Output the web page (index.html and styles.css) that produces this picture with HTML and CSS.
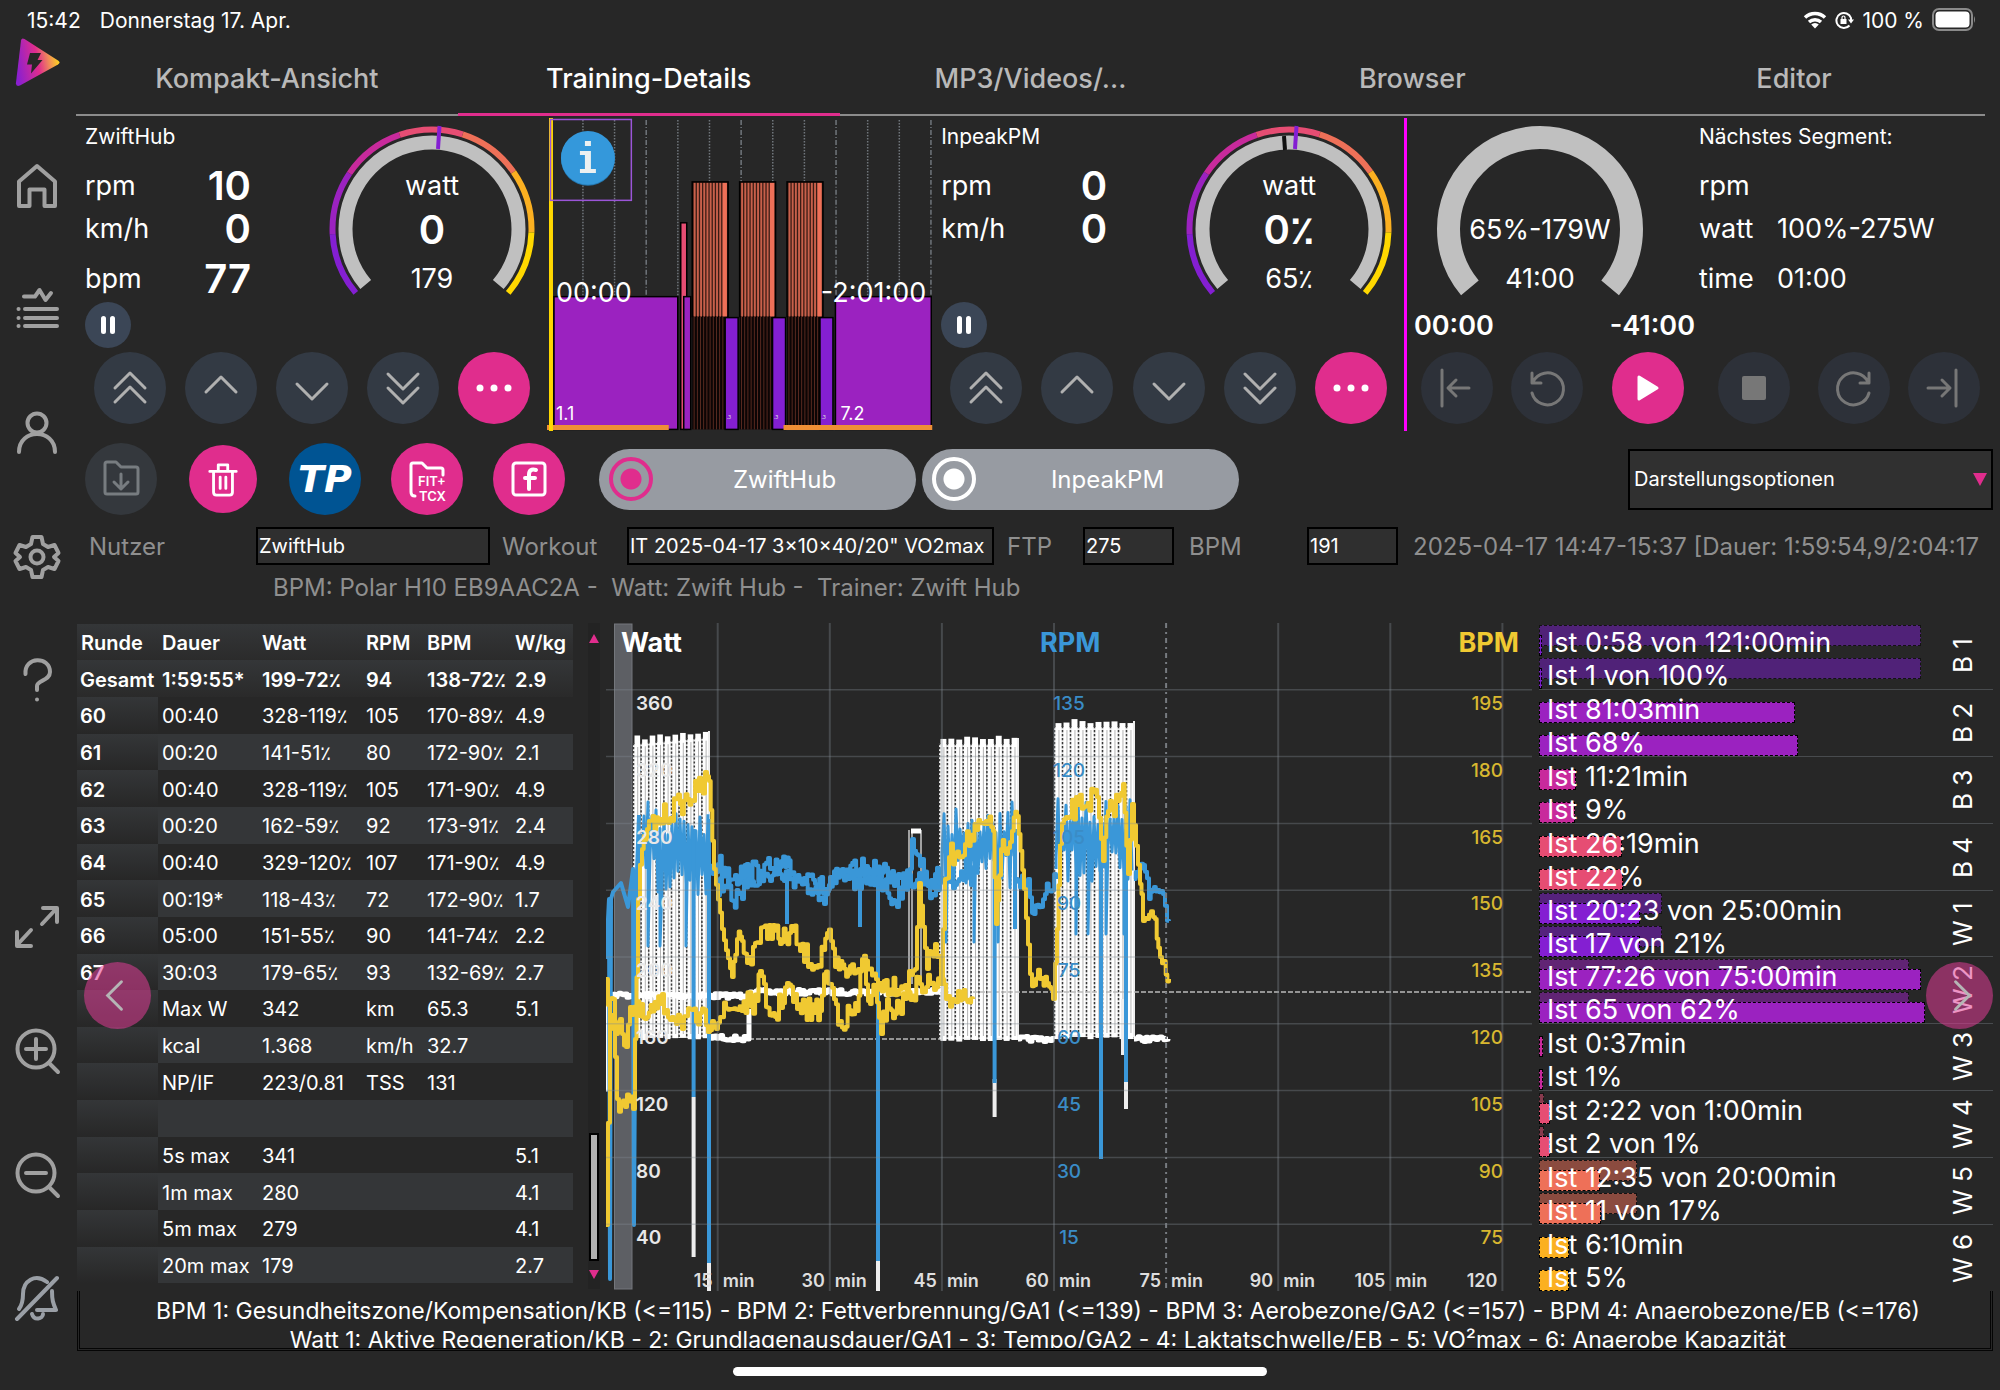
FILE: index.html
```html
<!DOCTYPE html>
<html lang="de">
<head>
<meta charset="utf-8">
<title>Training-Details</title>
<link rel="stylesheet" href="styles.css">
</head>
<body>
<svg class="defs" aria-hidden="true">
  <defs>
    <linearGradient id="logoFill" x1="0" y1="0.6" x2="1" y2="0.4">
      <stop offset="0" stop-color="#8a1fd0"/><stop offset="0.5" stop-color="#e02d8d"/><stop offset="0.75" stop-color="#f08a5a"/><stop offset="1" stop-color="#ffd91a"/>
    </linearGradient>
    <symbol id="up2" viewBox="0 0 72 72"><path d="M21 36 36 21l15 15M21 50 36 35l15 15"/></symbol>
    <symbol id="up1" viewBox="0 0 72 72"><path d="M21 40 36 25l15 15"/></symbol>
    <symbol id="down1" viewBox="0 0 72 72"><path d="M21 32 36 47l15-15"/></symbol>
    <symbol id="down2" viewBox="0 0 72 72"><path d="M21 22 36 37l15-15M21 36 36 51l15-15"/></symbol>
    <symbol id="dots" viewBox="0 0 72 72"><g fill="#fff" stroke="none"><circle cx="22" cy="36" r="3.5"/><circle cx="36" cy="36" r="3.5"/><circle cx="50" cy="36" r="3.5"/></g></symbol>
    <symbol id="pause" viewBox="0 0 46 46"><path d="M18.500 16.500v13M27.500 16.500v13" stroke="#fff" stroke-width="5"/></symbol>
    <symbol id="ring" viewBox="-104 -104 208 180">
      <g fill="none" stroke-width="6">
        <circle r="99.500" pathLength="360" stroke="#841fd2" stroke-dasharray="37 323" stroke-dashoffset="-140"/>
        <circle r="99.500" pathLength="360" stroke="#9b22c0" stroke-dasharray="37 323" stroke-dashoffset="-177"/>
        <circle r="99.500" pathLength="360" stroke="#c82a9c" stroke-dasharray="37 323" stroke-dashoffset="-214"/>
        <circle r="99.500" pathLength="360" stroke="#e64d73" stroke-dasharray="37 323" stroke-dashoffset="-251"/>
        <circle r="99.500" pathLength="360" stroke="#ee7058" stroke-dasharray="37 323" stroke-dashoffset="-288"/>
        <circle r="99.500" pathLength="360" stroke="#fbb021" stroke-dasharray="37 323" stroke-dashoffset="-325"/>
        <circle r="99.500" pathLength="360" stroke="#ffd800" stroke-dasharray="38 322" stroke-dashoffset="-2"/>
        <circle r="86.500" pathLength="360" stroke="#c0c0c0" stroke-width="14" stroke-dasharray="260 100" stroke-dashoffset="-140"/>
      </g>
      <path d="M6 -80 7.500 -103" stroke="#841fd2" stroke-width="4"/>
    </symbol>
  </defs>
</svg>

<header class="status">
  <span>15:42</span><span>Donnerstag 17. Apr.</span>
  <span class="status-right">
    <svg width="24" height="20" viewBox="0 0 24 20" fill="none" stroke="#fff" stroke-width="3.500"><path d="M2 7.500a14.500 14.500 0 0 1 20 0"/><path d="M6 12a9 9 0 0 1 12 0"/><path d="M12 18.500l-3.800-4a5.500 5.500 0 0 1 7.600 0z" fill="#fff" stroke="none"/></svg>
    <svg width="19" height="20" viewBox="0 0 19 20" fill="none" stroke="#fff" stroke-width="2"><path d="M14.500 15.500A7.500 7.500 0 1 1 16 8v3"/><path d="M13 9.500h6l-3 4z" fill="#fff" stroke="none"/><path d="M5.500 9h6v5h-6z" fill="#fff" stroke="none"/><path d="M7 9V7.500a1.500 1.500 0 0 1 3 0V9" stroke-width="1.200"/></svg>
    <span>100 %</span>
    <svg width="44" height="24" viewBox="0 0 44 24"><rect x="1" y="1" width="39" height="21" rx="6" fill="none" stroke="#8a8a8a" stroke-width="2"/><rect x="3.500" y="3.500" width="34" height="16" rx="4" fill="#fff"/><path d="M42 8v7q2-3.500 0-7" fill="#8a8a8a"/></svg>
  </span>
</header>

<div class="shell">
  <nav class="sidebar" aria-label="Navigation">
    <a class="logo" href="#" aria-label="Start"><svg width="48" height="48" viewBox="0 0 48 48"><path d="M8 2.500Q8.500-.5 11.500 1L45 22.500q3 2 0 4L7 47.500Q2.500 49 3 44.500Z" fill="url(#logoFill)"/><path d="M17 15h11l-3.500 7h5L18 35.500l1-9h-5z" fill="#272727"/></svg></a>
    <a href="#" aria-label="Startseite"><svg viewBox="0 0 48 48"><path d="M6 44V19.500L24 4l18 15.500V44H31.500V27.500h-15V44Z"/></svg></a>
    <a href="#" aria-label="Workouts"><svg viewBox="0 0 48 48"><path d="M11 11.500h11L26.500 5l6 10L38 8M12 24h32M12 33h32M12 41h32M5.500 24h.1M5.500 33h.1M5.500 41h.1"/></svg></a>
    <a href="#" aria-label="Profil"><svg viewBox="0 0 48 48"><circle cx="24" cy="14" r="9.500"/><path d="M6 43c0-24 36-24 36 0"/></svg></a>
    <a href="#" aria-label="Einstellungen"><svg viewBox="0 0 48 48"><path d="M19.500 4h9l1.500 7 5 3 6.500-2 4 8-4.500 4 4.500 4-4 8-6.500-2-5 3-1.500 7h-9L18 37l-5-3-6.500 2-4-8L7 24l-4.500-4 4-8 6.500 2 5-3Z"/><circle cx="24" cy="24" r="6.500"/></svg></a>
    <a href="#" aria-label="Hilfe"><svg viewBox="0 0 48 48"><path d="M12.500 18C11 0 37 0 37 16c0 9-13 8-13 14v4M24 43.500v.1"/></svg></a>
    <span></span>
    <a href="#" aria-label="Vollbild"><svg viewBox="0 0 48 48"><path d="M30 5h14v14M43 6 29 21M18 27 5 41M4 29v14h14"/></svg></a>
    <a href="#" aria-label="Vergrößern"><svg viewBox="0 0 48 48"><circle cx="23" cy="22" r="18.500"/><path d="M23 12v20M13 22h20M36 36l9 9"/></svg></a>
    <a href="#" aria-label="Verkleinern"><svg viewBox="0 0 48 48"><circle cx="23" cy="22" r="18.500"/><path d="M13 22h20M36 36l9 9"/></svg></a>
    <a class="muted" href="#" aria-label="Stumm"><svg viewBox="0 0 48 48"><path d="M44 4 4 45M34 8C22-1 10 7 10 20c0 7-1 11-4 15M39 17c0 9 1 12 4 19H24M19 40c2 7 11 5 11 0"/></svg></a>
  </nav>

  <main>
    <nav class="tabs" aria-label="Ansichten">
      <a href="#">Kompakt-Ansicht</a><a href="#" class="active">Training-Details</a><a href="#">MP3/Videos/...</a><a href="#">Browser</a><a href="#">Editor</a>
    </nav>

    <section class="panels">
      <div class="panel">
        <div class="panel-top">
          <div class="readings">
            <h2>ZwiftHub</h2>
            <p>rpm<b>10</b></p><p>km/h<b>0</b></p><p class="last">bpm<b>77</b></p>
          </div>
          <svg class="gauge" viewBox="-104 -104 208 180"><use href="#ring" x="-104" y="-104" width="208" height="180"/><text y="-34">watt</text><text y="15" class="big">0</text><text y="59">179</text></svg>
        </div>
        <div class="line"><button class="round small" aria-label="Pause"><svg><use href="#pause"/></svg></button></div>
        <div class="buttons">
          <button class="round" aria-label="Viel mehr"><svg><use href="#up2"/></svg></button>
          <button class="round" aria-label="Mehr"><svg><use href="#up1"/></svg></button>
          <button class="round" aria-label="Weniger"><svg><use href="#down1"/></svg></button>
          <button class="round" aria-label="Viel weniger"><svg><use href="#down2"/></svg></button>
          <button class="round pink" aria-label="Weitere"><svg><use href="#dots"/></svg></button>
        </div>
      </div>

      <svg class="profile" id="profile" viewBox="547 118 387 314">
        <g id="profile-lines"></g>
        <g stroke="#000" stroke-width="1.500">
          <rect x="554" y="297" width="124" height="133" fill="#9b22c0"/>
          <rect x="681" y="223" width="6" height="207" fill="#e64d73"/>
          <rect x="684" y="297" width="7" height="133" fill="#9b22c0"/>
          <rect x="836" y="297" width="96" height="133" fill="#9b22c0"/>
        </g>
        <g id="profile-blocks"></g>
        <path d="M547 428h122M784 428h149" stroke="#ef8f35" stroke-width="5"/>
        <path d="M551 118v314" stroke="#ffd800" stroke-width="4"/>
        <rect x="550.500" y="119.500" width="81" height="81" fill="none" stroke="#9b55d8" stroke-width="1.500"/>
        <circle cx="588" cy="159" r="27" fill="#2475ac"/><circle cx="588" cy="158" r="27" fill="#3498db"/>
        <path d="M585 141h6v5h-6zM580 151h11v18h5v4h-16v-4h5v-14h-5z" fill="#ecf0f1"/>
        <g fill="#fff" font-size="27"><text x="556" y="302">00:00</text><text x="927" y="302" text-anchor="end">-2:01:00</text></g>
        <g fill="#fff" font-size="18"><text x="556" y="421">1.1</text><text x="841" y="421">7.2</text></g>
      </svg>

      <div class="panel">
        <div class="panel-top">
          <div class="readings">
            <h2>InpeakPM</h2>
            <p>rpm<b>0</b></p><p>km/h<b>0</b></p><p class="last"></p>
          </div>
          <svg class="gauge" viewBox="-104 -104 208 180"><use href="#ring" x="-104" y="-104" width="208" height="180"/><path d="M-4-79-5-93" stroke="#111" stroke-width="4"/><text y="-34">watt</text><text y="15" class="big">0٪</text><text y="59">65٪</text></svg>
        </div>
        <div class="line"><button class="round small" aria-label="Pause"><svg><use href="#pause"/></svg></button></div>
        <div class="buttons">
          <button class="round" aria-label="Viel mehr"><svg><use href="#up2"/></svg></button>
          <button class="round" aria-label="Mehr"><svg><use href="#up1"/></svg></button>
          <button class="round" aria-label="Weniger"><svg><use href="#down1"/></svg></button>
          <button class="round" aria-label="Viel weniger"><svg><use href="#down2"/></svg></button>
          <button class="round pink" aria-label="Weitere"><svg><use href="#dots"/></svg></button>
        </div>
      </div>

      <div class="panel player">
        <div class="panel-top">
          <div class="segment-gauge">
            <svg class="gauge" viewBox="-104 -104 208 180"><circle r="91.500" pathLength="360" fill="none" stroke="#c0c0c0" stroke-width="23" stroke-dasharray="260 100" stroke-dashoffset="-140"/><text y="10">65%-179W</text><text y="59">41:00</text></svg>
          </div>
          <div class="readings next">
            <h2>Nächstes Segment:</h2>
            <p>rpm</p><p>watt<span>100%-275W</span></p><p class="last">time<span>01:00</span></p>
          </div>
        </div>
        <div class="line times"><span>00:00</span><span>-41:00</span></div>
        <div class="buttons">
          <div class="pair">
            <button class="round off" aria-label="Zum Anfang"><svg viewBox="0 0 72 72"><path d="M21 18v36M48 36H28M35 28l-8 8 8 8"/></svg></button>
            <button class="round off" aria-label="Zurück"><svg viewBox="0 0 72 72"><path d="M21 21v10h9M22 30a16 16 0 1 1-1 11"/></svg></button>
          </div>
          <div class="pair wide">
            <button class="round pink" aria-label="Start"><svg viewBox="0 0 72 72"><path d="M27 25v22l18-11z" fill="#fff" stroke="#fff"/></svg></button>
            <button class="round off" aria-label="Stopp"><svg viewBox="0 0 72 72"><rect x="24" y="24" width="24" height="24" rx="2" fill="#777" stroke="none"/></svg></button>
          </div>
          <div class="pair">
            <button class="round off" aria-label="Vor"><svg viewBox="0 0 72 72"><path d="M51 21v10h-9M50 30a16 16 0 1 0 1 11"/></svg></button>
            <button class="round off" aria-label="Zum Ende"><svg viewBox="0 0 72 72"><path d="M48 18v36M20 36h21M34 28l8 8-8 8"/></svg></button>
          </div>
        </div>
      </div>
    </section>

    <section class="tools">
      <div class="tool-buttons">
        <button class="round dim" aria-label="Laden"><svg viewBox="0 0 72 72"><path d="M20 49V21q0-2 2-2h9l5 5h15q2 0 2 2v23q0 2-2 2H22q-2 0-2-2zM36 31v15M29 39l7 7 7-7"/></svg></button>
        <button class="round pink trash" aria-label="Löschen"><svg viewBox="0 0 72 72"><path d="M22 28h28M26 28v22q0 3 3 3h14q3 0 3-3V28M31 27v-6h10v6M33 34v12M39 34v12"/></svg></button>
        <button class="round tp">TP</button>
        <button class="round pink" aria-label="FIT und TCX"><svg viewBox="0 0 72 72"><path d="M24 53q-4 0-4-4V22q0-2 2-2h9l5 5h14q2 0 2 2v5"/><text x="27" y="43" font-size="13">FIT+</text><text x="28" y="58" font-size="13">TCX</text></svg></button>
        <button class="round pink" aria-label="Facebook"><svg viewBox="0 0 72 72"><rect x="20" y="20" width="32" height="32" rx="3"/><path d="M43 27q-7-2-7 5v14M32 35h10" stroke-width="4"/></svg></button>
      </div>
      <label class="pill"><input type="radio" name="source" checked><span>ZwiftHub</span></label>
      <label class="pill"><input type="radio" name="source"><span>InpeakPM</span></label>
      <div class="select-box"><select aria-label="Darstellungsoptionen"><option>Darstellungsoptionen</option></select></div>
    </section>

    <form class="meta">
      <label for="user" class="l-user">Nutzer</label><input id="user" class="i-user" value="ZwiftHub">
      <label for="workout" class="l-workout">Workout</label><input id="workout" class="i-workout" value="IT 2025-04-17 3×10×40/20&quot; VO2max">
      <label for="ftp" class="l-ftp">FTP</label><input id="ftp" class="i-num" value="275">
      <label for="bpm" class="l-bpm">BPM</label><input id="bpm" class="i-num" value="191">
      <span class="date">2025-04-17 14:47-15:37 [Dauer: 1:59:54,9/2:04:17</span>
    </form>
    <p class="devices">BPM: Polar H10 EB9AAC2A -&nbsp; Watt: Zwift Hub -&nbsp; Trainer: Zwift Hub</p>

    <section class="details">
      <div class="table-wrap">
        <table>
          <colgroup><col class="c1"><col class="c2"><col class="c3"><col class="c4"><col class="c5"><col class="c6"></colgroup>
          <thead><tr><th>Runde</th><th>Dauer</th><th>Watt</th><th>RPM</th><th>BPM</th><th>W/kg</th></tr></thead>
          <tbody>
            <tr class="total"><th>Gesamt</th><td>1:59:55*</td><td>199-72٪</td><td>94</td><td>138-72٪</td><td>2.9</td></tr>
            <tr><th>60</th><td>00:40</td><td>328-119٪</td><td>105</td><td>170-89٪</td><td>4.9</td></tr>
            <tr><th>61</th><td>00:20</td><td>141-51٪</td><td>80</td><td>172-90٪</td><td>2.1</td></tr>
            <tr><th>62</th><td>00:40</td><td>328-119٪</td><td>105</td><td>171-90٪</td><td>4.9</td></tr>
            <tr><th>63</th><td>00:20</td><td>162-59٪</td><td>92</td><td>173-91٪</td><td>2.4</td></tr>
            <tr><th>64</th><td>00:40</td><td>329-120٪</td><td>107</td><td>171-90٪</td><td>4.9</td></tr>
            <tr><th>65</th><td>00:19*</td><td>118-43٪</td><td>72</td><td>172-90٪</td><td>1.7</td></tr>
            <tr><th>66</th><td>05:00</td><td>151-55٪</td><td>90</td><td>141-74٪</td><td>2.2</td></tr>
            <tr><th>67</th><td>30:03</td><td>179-65٪</td><td>93</td><td>132-69٪</td><td>2.7</td></tr>
            <tr><th></th><td>Max W</td><td>342</td><td>km</td><td>65.3</td><td>5.1</td></tr>
            <tr><th></th><td>kcal</td><td>1.368</td><td>km/h</td><td>32.7</td><td></td></tr>
            <tr><th></th><td>NP/IF</td><td>223/0.81</td><td>TSS</td><td>131</td><td></td></tr>
            <tr><th></th><td></td><td></td><td></td><td></td><td></td></tr>
            <tr><th></th><td>5s max</td><td>341</td><td></td><td></td><td>5.1</td></tr>
            <tr><th></th><td>1m max</td><td>280</td><td></td><td></td><td>4.1</td></tr>
            <tr><th></th><td>5m max</td><td>279</td><td></td><td></td><td>4.1</td></tr>
            <tr><th></th><td>20m max</td><td>179</td><td></td><td></td><td>2.7</td></tr>
          </tbody>
        </table>
        <button class="pager left" aria-label="Zurück blättern"><svg viewBox="0 0 68 68"><path d="M38 20 24 34l14 14"/></svg></button>
      </div>
      <div class="scroll"><i class="arrow up"></i><i class="thumb"></i><i class="arrow down"></i></div>
      <svg class="chart" viewBox="606 624 926 668">
        <rect x="614.500" y="625" width="17.500" height="665" fill="#5d5f64" stroke="#74777c"/>
        <g id="series" fill="none"></g>
        <g id="grid"></g>
        <g id="labels"></g>
      </svg>
      <div class="zones" id="zones"></div>
    </section>

    <footer class="legend">
      <p>BPM 1: Gesundheitszone/Kompensation/KB (&lt;=115) - BPM 2: Fettverbrennung/GA1 (&lt;=139) - BPM 3: Aerobezone/GA2 (&lt;=157) - BPM 4: Anaerobezone/EB (&lt;=176)</p>
      <p>Watt 1: Aktive Regeneration/KB - 2: Grundlagenausdauer/GA1 - 3: Tempo/GA2 - 4: Laktatschwelle/EB - 5: VO²max - 6: Anaerobe Kapazität</p>
    </footer>
    <div class="home-bar"></div>
  </main>
</div>
<script src="chart.js"></script>
</body>
</html>
```

FILE: styles.css
```css
* { box-sizing: border-box; }
body {
  margin: 0;
  min-height: 100vh;
  display: flex;
  flex-direction: column;
  background: #272727;
  color: #fff;
  font-family: Inter, "DejaVu Sans", sans-serif;
  font-size: 20px;
}
h2, p { margin: 0; font-weight: 400; }
a { color: inherit; text-decoration: none; }
button { border: 0; padding: 0; font: inherit; color: inherit; }
.defs { position: absolute; width: 0; height: 0; }

.status { display: flex; align-items: center; gap: 19px; height: 40px; padding: 0 24px 0 27px; font-size: 21px; }
.status-right { display: flex; align-items: center; gap: 8px; margin-left: auto; }

.shell { flex: 1; display: grid; grid-template-columns: 76px minmax(0, 1fr); }
.sidebar { display: flex; flex-direction: column; padding: 0 2px 30px 0; }
.sidebar > * { flex: 1; display: flex; align-items: center; justify-content: center; }
.sidebar .logo { flex: none; height: 44px; margin-bottom: 40px; }
.sidebar svg { width: 48px; height: 48px; fill: none; stroke: #a0a0a0; stroke-width: 4; stroke-linecap: round; stroke-linejoin: round; }
.sidebar .logo svg { stroke: none; }
.sidebar .muted svg { stroke: #9a9fa6; }
main { display: flex; flex-direction: column; padding-right: 7px; }

.tabs { display: flex; margin-right: 8px; }
.tabs a { flex: 1; height: 76px; line-height: 77px; text-align: center; font-size: 27px; font-weight: 500; color: #b9b9b9; border-bottom: 2px solid #8c8c8c; }
.tabs a.active { color: #fff; border-bottom: 3px solid #e02d8d; }

.panels { display: grid; grid-template-columns: 472fr 388fr 473fr 584fr; margin-top: 2px; padding-left: 1px; }
.panel { padding: 0 11px 0 8px; }
.panel-top { display: flex; justify-content: space-between; height: 184px; }
.readings { width: 166px; font-size: 27px; }
.readings h2 { height: 38px; line-height: 38px; margin-bottom: 8px; font-size: 21px; }
.readings p { display: flex; justify-content: space-between; align-items: center; height: 43px; line-height: 43px; }
.readings .last { margin-top: 7px; }
.readings b { font-size: 40px; font-weight: 600; line-height: 43px; }
.gauge { width: 208px; height: 180px; margin-top: 7px; }
.gauge text { fill: #fff; font-size: 27px; text-anchor: middle; }
.gauge .big { font-size: 40px; font-weight: 600; }
.line { height: 46px; }
.buttons { display: flex; justify-content: space-between; margin: 4px 6px 0 9px; }
.round { width: 72px; height: 72px; flex: none; border-radius: 50%; background: #333a44; }
.round svg { display: block; width: 100%; height: 100%; fill: none; stroke: #b0b0b0; stroke-width: 3; stroke-linecap: round; stroke-linejoin: round; }
.round.small { width: 46px; height: 46px; background: #3b4656; }
.round.pink { background: #e02d8d; }
.round.pink svg { stroke: #fff; }
.round.off { background: #2d3139; }
.round.off svg { stroke: #777; }
.round.dim { background: #34383d; }
.round.dim svg { stroke: #777c80; }
.round.trash { width: 68px; height: 68px; margin: 2px; }
.profile { width: 387px; max-width: 100%; display: block; }
.player { border-left: 3px solid #f0f; padding: 0 6px 0 7px; }
.segment-gauge { width: 281px; padding-left: 22px; }
.readings.next { width: 288px; margin-right: auto; margin-left: 4px; white-space: nowrap; }
.next p { display: grid; grid-template-columns: 78px 1fr; }
.times { display: flex; justify-content: space-between; align-items: center; width: 281px; font-size: 27px; font-weight: 600; }
.player .buttons { margin: 4px 7px 0 7px; }
.pair { display: flex; gap: 18px; }
.pair.wide { gap: 34px; }

.tools { display: flex; align-items: center; height: 72px; margin-top: 12px; padding-left: 9px; }
.tool-buttons { display: flex; gap: 30px; margin-right: 34px; }
.tp { background: #005493; font-family: "DejaVu Sans", sans-serif; font-size: 38px; font-weight: 700; font-style: italic; }
.tools text { fill: #fff; stroke: none; font-weight: 600; }
.pill { display: flex; align-items: center; width: 317px; height: 61px; margin-right: 6px; padding-left: 10px; border-radius: 31px; background: #979ba2; font-size: 24px; }
.pill span { flex: 1; text-align: center; }
.pill input { appearance: none; flex: none; width: 44px; height: 44px; margin: 0; border: 4px solid; border-radius: 50%; color: #fff; background: radial-gradient(circle, currentColor 10px, transparent 11px); }
.pill input:checked { color: #e02d8d; }
.select-box { position: relative; margin-left: auto; }
.select-box::after { content: ""; position: absolute; right: 6px; top: 24px; border: 7px solid transparent; border-top: 13px solid #e02d8d; border-bottom: 0; pointer-events: none; }
select { appearance: none; width: 365px; height: 61px; padding: 0 4px; border: 2px solid #000; border-radius: 0; background: #303030; color: #fff; font: 20px Inter, sans-serif; }

.meta { display: flex; align-items: center; height: 50px; margin-top: 6px; padding-left: 13px; font-size: 24px; color: #8f8f8f; white-space: nowrap; }
.meta input { flex: none; height: 38px; padding: 0 1px; border: 2px solid #000; background: #2f2f2f; color: #fff; font: 20px Inter, sans-serif; }
.meta label { flex: none; }
.l-user { width: 167px; }
.i-user { width: 234px; margin-right: 12px; }
.l-workout { width: 125px; }
.i-workout { width: 367px; margin-right: 13px; }
.l-ftp { width: 76px; }
.i-num { width: 91px; margin-right: 15px; }
.l-bpm { width: 118px; }
.date { overflow: hidden; margin-right: 4px; }
.devices { padding-left: 197px; height: 34px; line-height: 34px; font-size: 24px; color: #8f8f8f; white-space: pre; }

.details { display: grid; grid-template-columns: 496px 12px minmax(0, 1fr) 454px; margin-top: 18px; padding-left: 1px; }
.table-wrap { position: relative; }
table { width: 496px; height: 659px; margin-top: 1px; table-layout: fixed; border-collapse: collapse; font-size: 20px; }
.c1 { width: 81px; } .c2 { width: 100px; } .c3 { width: 104px; } .c4 { width: 61px; } .c5 { width: 88px; } .c6 { width: 62px; }
tr { height: 36px; }
th, td { height: 36px; padding: 2px 0 0 4px; text-align: left; white-space: nowrap; line-height: 24px; }
th { font-weight: 600; background: linear-gradient(#343638, #272727); }
thead th { background: linear-gradient(#343638, #2b2b2b); }
tbody th { padding-left: 3px; }
tbody tr:nth-child(odd) td { background: #343638; }
.details .total th, .details .total td { font-weight: 600; background: linear-gradient(#343638, #2a2a2a); }
.pager { position: absolute; z-index: 1; top: 339px; width: 67px; height: 67px; border-radius: 50%; background: rgba(224, 60, 150, 0.55); }
.pager svg { display: block; fill: none; stroke: #b5b5b5; stroke-width: 3; stroke-linecap: round; }
.pager.left { left: 7px; }
.pager.right { right: 0; }
.scroll { display: flex; flex-direction: column; align-items: center; margin-left: 15px; width: 12px; height: 666px; background: #232323; }
.arrow { border: 5px solid transparent; }
.arrow.up { margin-top: 11px; border-bottom: 9px solid #e02d8d; border-top: 0; }
.arrow.down { margin: 9px 0 10px; border-top: 9px solid #e02d8d; border-bottom: 0; }
.thumb { width: 10px; height: 128px; margin-top: auto; border: 2px solid #000; background: #b0b0b0; }
.chart { width: calc(100% - 28px); margin-left: 21px; display: block; }

.zones { position: relative; }
.zone { display: grid; grid-template-columns: 1fr 60px; height: 67px; border-bottom: 1px solid #484b4e; }
.zone:nth-of-type(5n) { height: 66px; }
.zone:last-of-type { border: 0; }
.bars { display: grid; grid-template-rows: 33px 33px; }
.bar-line { display: grid; align-content: start; padding-top: 2px; height: 33px; }
.bar-line > * { grid-area: 1 / 1; }
.bar { height: 21px; border: 1px dashed #000; }
.planned { opacity: 0.5; }
.actual { position: relative; margin-top: 10px; }
.bar-line span { padding: 3px 0 0 8px; font-size: 27px; line-height: 30px; white-space: nowrap; position: relative; }
.zone-name { writing-mode: vertical-rl; transform: rotate(180deg); text-align: center; line-height: 60px; font-size: 26px; }

.legend { height: 60px; margin-left: 1px; border: 3px double #050505; border-top: 0; overflow: hidden; text-align: center; font-size: 23px; white-space: nowrap; }
.legend p { height: 29px; line-height: 41px; padding-left: 6px; }
.home-bar { width: 534px; height: 9px; margin: 16px auto 0; border-radius: 5px; background: #fff; transform: translateX(-35px); }
```

FILE: chart.js
```js
const NS = "http://www.w3.org/2000/svg";
function add(parent, name, attrs, text) {
  const el = document.createElementNS(NS, name);
  for (const k in attrs) el.setAttribute(k, attrs[k]);
  if (text !== undefined) el.textContent = text;
  parent.appendChild(el);
  return el;
}
const byId = (id) => document.getElementById(id);

let seed = 7;
function rnd() {
  seed = (seed * 16807) % 2147483647;
  return seed / 2147483647 - 0.5;
}

/* Workout profile */
const pl = byId("profile-lines");
for (let i = 0; i < 12; i++) {
  const x = 583 + i * 31.7;
  add(pl, "path", { d: `M${x} 120V297`, stroke: "#70767c", "stroke-width": 1.5, "stroke-dasharray": i % 3 === 2 ? "5 2 1 2" : "1.5 1.5" });
}
const pb = byId("profile-blocks");
[692.5, 740, 787.5].forEach((x) => {
  add(pb, "rect", { x, y: 182, width: 36, height: 135, fill: "#3a1c15", stroke: "#000", "stroke-width": 1.5 });
  add(pb, "rect", { x, y: 317, width: 33, height: 113, fill: "#0c0505" });
  for (let i = 0; i < 10; i++) {
    const bx = x + 1.5 + i * 3.2;
    add(pb, "rect", { x: bx, y: 183, width: i === 9 ? 4.5 : 1.9, height: 134, fill: i === 9 ? "#ee7058" : "#c8604b" });
    add(pb, "rect", { x: bx, y: 317, width: 0.8, height: 113, fill: "#6a3226" });
  }
  add(pb, "rect", { x: x + 33, y: 318, width: 13, height: 112, fill: "#841fd2", stroke: "#000", "stroke-width": 1.5 });
  add(pb, "text", { x: x + 34.5, y: 420, fill: "#ddd", "font-size": 5 }, ".3");
});

/* Chart grid */
const grid = byId("grid");
const GRID = "rgba(130,138,146,0.35)";
for (let i = 1; i < 10; i++) add(grid, "path", { d: `M606 ${624 + i * 66.8}H1532`, stroke: GRID, "stroke-width": 1.5 });
for (let i = 1; i <= 8; i++) {
  const a = { d: `M${605.6 + i * 112.1} 624V1292`, stroke: i === 5 ? "#777b80" : GRID, "stroke-width": 2 };
  if (i === 5) a["stroke-dasharray"] = "5 4 2 4";
  add(grid, "path", a);
}

/* Series: points are [x, y] or [x, y, noise up to this point] */
const s = byId("series");
function noisy(points, amp, step) {
  let d = "";
  for (let i = 0; i < points.length - 1; i++) {
    const [x0, y0] = points[i], [x1, y1, a] = points[i + 1];
    const n = Math.max(1, Math.round((x1 - x0) / step));
    for (let j = 0; j < n; j++) {
      const t = j / n;
      const k = a === undefined ? amp : a;
      const x = (x0 + (x1 - x0) * t).toFixed(1);
      const y = (y0 + (y1 - y0) * t + (j ? rnd() * k : 0)).toFixed(1);
      d += d ? `H${x}V${y}` : `M${x} ${y}`;
    }
  }
  const l = points[points.length - 1];
  return d + `H${l[0]}V${l[1]}`;
}
const line = (d, color, w) => add(s, "path", { d, stroke: color, "stroke-width": w, "stroke-linejoin": "round" });

function intervals(x0, x1, y0, y1, bottom) {
  const n = 10, p = (x1 - x0) / n;
  for (let i = 0; i < n; i++) {
    const x = x0 + i * p, y = y0 + ((y1 - y0) * i) / n;
    add(s, "rect", { x, y: y + 6, width: p, height: bottom - y - 6, fill: "#ededed" });
    add(s, "rect", { x: x + 1.5, y: y + rnd() * 5, width: p - 2, height: bottom - y, fill: "#fff" });
    add(s, "path", { d: `M${x + 0.5} ${y + 5}V${bottom}`, stroke: "#3a3a3a", "stroke-width": 1.5, "stroke-dasharray": "2.2 1.8" });
    add(s, "path", { d: `M${x + p * 0.62} ${y + 9}V${bottom - 4}`, stroke: "#b5b5b5", "stroke-width": 1 });
  }
  add(s, "path", { d: `M${x1} ${y1}V${bottom}`, stroke: "#eee", "stroke-width": 2 });
}
intervals(633, 709, 739, 732, 1039);
intervals(939, 1018, 739, 739, 1041);
intervals(1054, 1134, 722, 722, 1038);
line("M909 831V985M912 831V985M921 831V985", "#ccc", 1.5);
line("M911 832h10", "#fff", 5);
line("M693.6 1098V1258M709 1200V1292M878 1200V1292M994.6 1080V1118M1123 1000V1056M1126 1080V1110", "#eee", 4);
add(s, "path", { d: "M749 1040H940M973 993H1532", stroke: "#bbb", "stroke-width": 1.5, "stroke-dasharray": "5 2" });
line(noisy([[606, 1090], [607, 1000], [609, 996], [745, 997], [750, 993], [940, 993]], 5, 2), "#fff", 5);
line(noisy([[709, 1038], [748, 1040], [749, 1010]], 5, 2), "#fff", 5);
line(noisy([[1018, 1040], [1054, 1040]], 5, 2), "#fff", 5);
line(noisy([[1134, 1040], [1168, 1040]], 5, 2), "#fff", 5);

const BLUE = "#3a97d8", GOLD = "#f0c932";
line("M606 960L609 900L610 1280L611 900L613 893L621 884L628 908L633 870L634 1226L636 900L639 816", BLUE, 4);
function cadence(x0, x1, hi, lo, dips) {
  let d = `M${x0} ${lo}`;
  for (let x = x0, i = 0; x < x1; x += 2, i++) {
    d += `L${x} ${(i % 2 ? hi + 14 + rnd() * 34 : lo - 6 + rnd() * 40).toFixed(1)}`;
    if (dips.includes(i)) d += `L${x} ${lo + 65}`;
  }
  line(d, BLUE, 3);
}
cadence(638, 710, 806, 882, [5, 11, 24]);
cadence(942, 1016, 806, 878, [2, 16, 28]);
cadence(1056, 1134, 802, 870, [10, 16, 25, 34]);
line("M693.6 830V1098M709 820V1264M878 880V1262M994.6 840V1084M1101 830V1160M1126 830V1083M787 880V925M860 880V928M1015 830V930", BLUE, 4);
line(noisy([[709, 870], [718, 865], [735, 876], [770, 870], [785, 868], [800, 880], [825, 890], [860, 870], [908, 882], [912, 840], [916, 855], [922, 860], [932, 895], [942, 880]], 24, 2), BLUE, 4);
line(noisy([[716, 890], [728, 880], [733, 902], [742, 900], [748, 880], [780, 875], [815, 885], [824, 905], [832, 880], [850, 878], [860, 890], [878, 878], [895, 902], [905, 880], [973, 878]], 22, 2), BLUE, 4);
line(noisy([[1016, 880], [1028, 880], [1032, 914], [1041, 908], [1045, 895], [1056, 880]], 18, 2), BLUE, 4);
line(noisy([[1134, 880], [1143, 866], [1149, 900], [1154, 888], [1163, 895], [1169, 922]], 22, 2), BLUE, 4);

line(noisy([[606, 1226], [610, 1000], [613, 1000], [617, 1100], [633, 1110], [635, 1040], [638, 900], [642, 850], [647, 830], [660, 820], [680, 805], [697, 792], [709, 782, 30], [714, 870, 4], [722, 930, 4], [732, 978, 4], [737, 940, 8], [742, 942], [747, 964], [755, 944], [773, 926], [780, 945], [793, 932], [800, 952], [818, 966], [827, 934], [835, 968], [848, 975], [862, 962], [880, 984], [905, 986], [915, 970], [919, 884, 4], [927, 970, 4], [935, 945], [941, 980], [945, 880, 4], [949, 858], [965, 845], [984, 825], [993, 832], [996, 925, 4], [1001, 850, 4], [1006, 855], [1012, 832], [1017, 817], [1024, 890, 4], [1030, 975, 4], [1040, 980], [1047, 984], [1053, 1000], [1057, 930, 4], [1060, 845, 4], [1066, 818], [1078, 806], [1097, 798], [1103, 862, 4], [1108, 812], [1118, 802], [1123, 785], [1128, 875, 4], [1132, 805, 4], [1140, 885, 4], [1143, 922], [1155, 920], [1160, 958], [1164, 962], [1169, 980]], 24, 2), GOLD, 4);
line(noisy([[606, 980], [610, 1030], [620, 1020], [626, 1048], [630, 1008], [645, 1020], [660, 1005], [680, 1020], [712, 1022], [730, 1010], [757, 1002], [760, 972], [766, 1008], [775, 1018], [787, 984], [797, 1010], [820, 1012], [824, 975], [830, 985], [840, 1022], [857, 1012], [862, 960], [870, 1005], [875, 990], [881, 1035, 5], [887, 1000], [895, 1015], [905, 1000], [920, 985], [940, 985], [946, 1000], [958, 992], [973, 1000]], 24, 2), GOLD, 4);

/* Chart labels */
const lab = byId("labels");
const label = (x, y, t, fill, anchor, size, weight) => add(lab, "text", { x, y, fill, "text-anchor": anchor, "font-size": size, "font-weight": weight }, t);
for (let i = 0; i < 9; i++) {
  const y = 711 + i * 66.8;
  label(636, y, 360 - i * 40, "#e8e8e8", "start", 19, 600);
  label(1069, y, 135 - i * 15, "#3a8cc6", "middle", 19, 500);
  label(1503, y, 195 - i * 15, "#d8b730", "end", 19, 500);
}
for (let i = 1; i <= 8; i++) {
  const x = 605.6 + i * 112.1;
  label(x - 5, 1288, i * 15, "#dedede", "end", 18, 600);
  if (i < 8) label(x + 5, 1288, "min", "#dedede", "start", 18, 600);
}
label(621, 653, "Watt", "#fff", "start", 27, 700);
label(1040, 653, "RPM", "#3a97d8", "start", 27, 700);
label(1519, 653, "BPM", "#f0c932", "end", 27, 700);

/* Zones: name, colour, then text, planned width, actual width for each line */
const zones = [
  ["B 1", "#7a1fc8", ["Ist 0:58 von 121:00min", 382, 3], ["Ist 1 von 100%", 382, 3]],
  ["B 2", "#9b22c0", ["Ist 81:03min", 0, 256], ["Ist 68%", 0, 259]],
  ["B 3", "#c82a9c", ["Ist 11:21min", 0, 37], ["Ist 9%", 0, 36]],
  ["B 4", "#e64d73", ["Ist 26:19min", 0, 83], ["Ist 22%", 0, 84]],
  ["W 1", "#841fd2", ["Ist 20:23 von 25:00min", 123, 101], ["Ist 17 von 21%", 123, 101]],
  ["W 2", "#9b22c0", ["Ist 77:26 von 75:00min", 370, 382], ["Ist 65 von 62%", 370, 386]],
  ["W 3", "#c82a9c", ["Ist 0:37min", 0, 4], ["Ist 1%", 0, 4]],
  ["W 4", "#e64d73", ["Ist 2:22 von 1:00min", 5, 11], ["Ist 2 von 1%", 5, 11]],
  ["W 5", "#ee7058", ["Ist 12:35 von 20:00min", 98, 61], ["Ist 11 von 17%", 98, 62]],
  ["W 6", "#fbb021", ["Ist 6:10min", 0, 30], ["Ist 5%", 0, 30]],
];
const bar = (kind, w, color) => (w ? `<div class="bar ${kind}" style="width:${((w / 394) * 100).toFixed(1)}%;background-color:${color}"></div>` : "");
byId("zones").innerHTML =
  zones.map(([name, color, ...rows]) =>
    `<div class="zone"><div class="bars">${rows.map(([t, p, a]) =>
      `<div class="bar-line">${bar("planned", p, color)}${bar("actual", a, color)}<span>${t}</span></div>`).join("")}</div><div class="zone-name">${name}</div></div>`).join("") +
  '<button class="pager right" aria-label="Weiter blättern"><svg viewBox="0 0 68 68"><path d="M30 20l14 14-14 14"/></svg></button>';
```
